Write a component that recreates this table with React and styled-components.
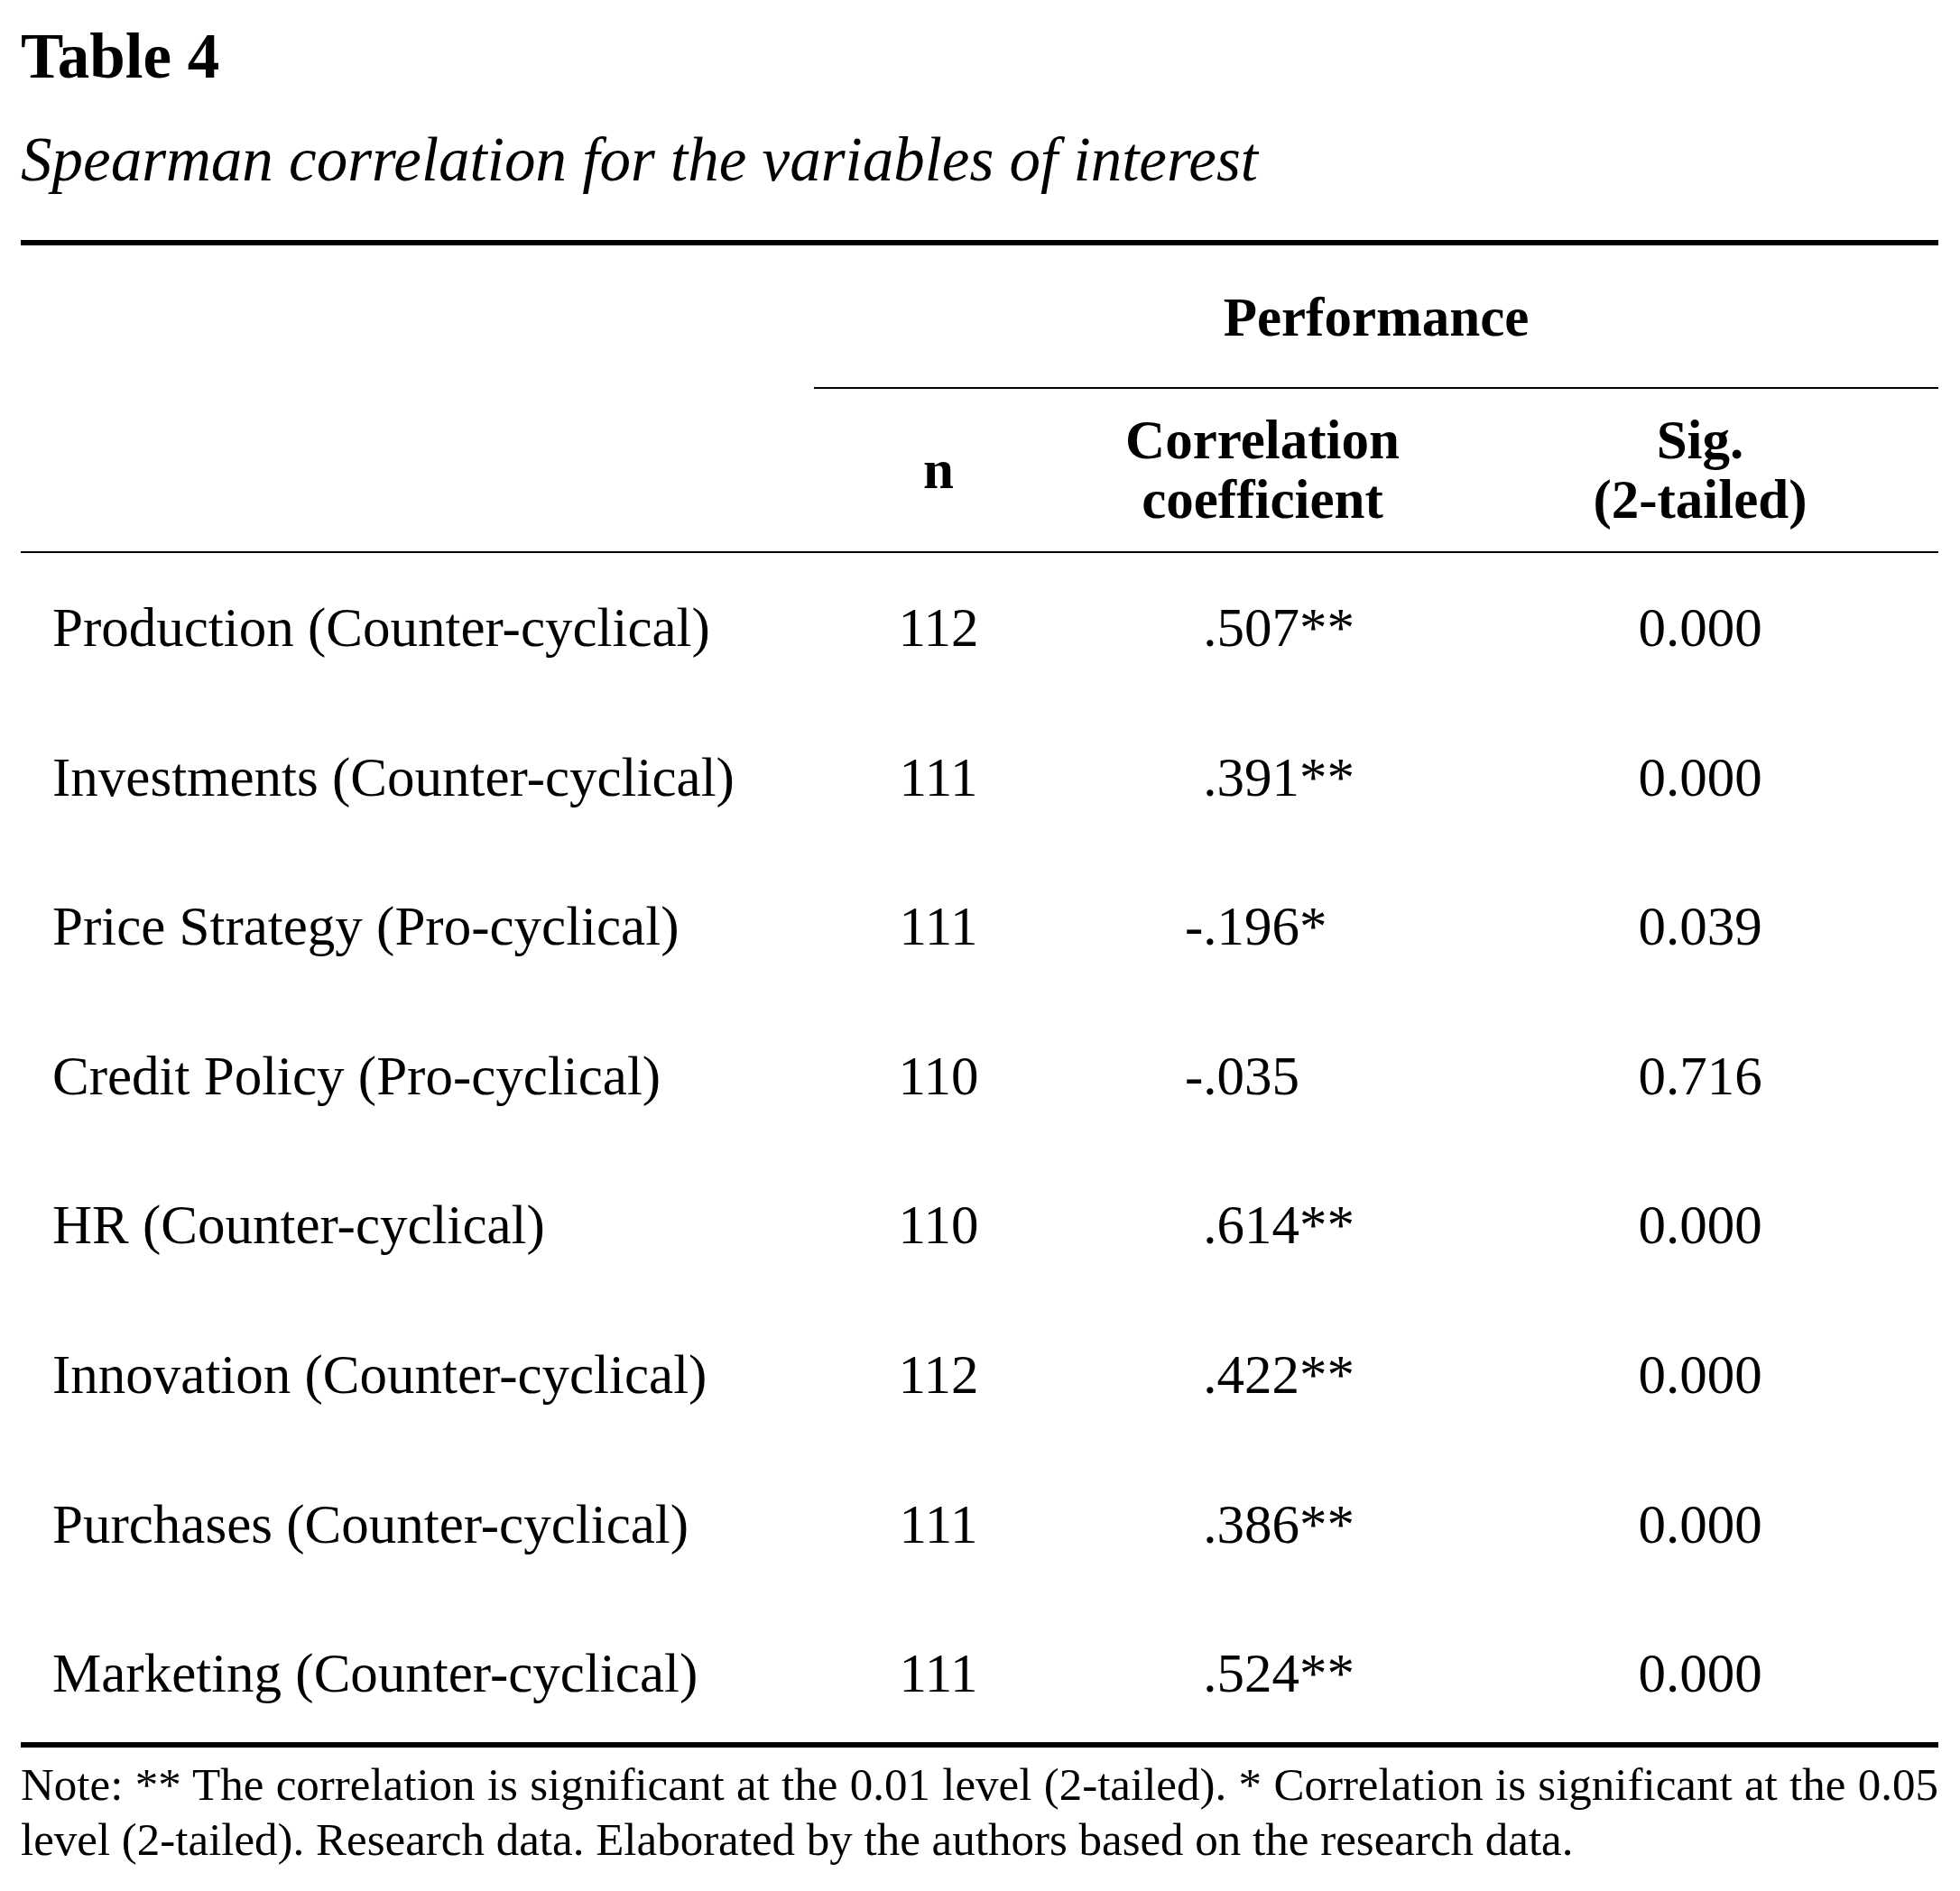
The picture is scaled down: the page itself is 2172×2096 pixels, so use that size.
import React from 'react'
import styled, { createGlobalStyle } from 'styled-components';

const GlobalStyle = createGlobalStyle`
  body {
    margin: 0;
    background: #ffffff;
    color: #000000;
    font-family: "Liberation Serif", "Times New Roman", serif;
  }
`

const rows = [
  { label: 'Production (Counter-cyclical)', n: 112, corr: '.507**', sig: '0.000' },
  { label: 'Investments (Counter-cyclical)', n: 111, corr: '.391**', sig: '0.000' },
  { label: 'Price Strategy (Pro-cyclical)', n: 111, corr: '-.196*', sig: '0.039' },
  { label: 'Credit Policy (Pro-cyclical)', n: 110, corr: '-.035', sig: '0.716' },
  { label: 'HR (Counter-cyclical)', n: 110, corr: '.614**', sig: '0.000' },
  { label: 'Innovation (Counter-cyclical)', n: 112, corr: '.422**', sig: '0.000' },
  { label: 'Purchases (Counter-cyclical)', n: 111, corr: '.386**', sig: '0.000' },
  { label: 'Marketing (Counter-cyclical)', n: 111, corr: '.524**', sig: '0.000' },
]

function App() {
  return (
    <Page>
      <GlobalStyle />
      <Title>Table 4</Title>
      <Caption>Spearman correlation for the variables of interest</Caption>

      <Table>
        <colgroup>
          <col style={{ width: 879 }} />
          <col style={{ width: 276 }} />
          <col style={{ width: 442 }} />
          <col style={{ width: 528 }} />
        </colgroup>
        <thead>
          <tr>
            <GroupCell />
            <GroupCell colSpan={3} $ruled>Performance</GroupCell>
          </tr>
          <tr>
            <HeadCell />
            <HeadCell>n</HeadCell>
            <HeadCell>Correlation<br />coefficient</HeadCell>
            <HeadCell>Sig.<br />(2-tailed)</HeadCell>
          </tr>
        </thead>
        <tbody>
          {rows.map((r) => (
            <Row key={r.label}>
              <LabelCell>{r.label}</LabelCell>
              <NumCell>{r.n}</NumCell>
              <CorrCell>
                {/* keep the decimal points lined up */}
                {!r.corr.startsWith('-') && <Ghost>-</Ghost>}
                {r.corr}
              </CorrCell>
              <NumCell>{r.sig}</NumCell>
            </Row>
          ))}
        </tbody>
      </Table>

      <Note>
        Note: ** The correlation is significant at the 0.01 level (2-tailed). * Correlation is significant at the 0.05 level (2-tailed). Research data. Elaborated by the authors based on the research data.
      </Note>
    </Page>
  )
}

const Page = styled.div`
  width: 2125px;
  padding: 0 24px 0 23px;
`

const Title = styled.h1`
  margin: 12px 0 0 0;
  font-size: 71px;
  line-height: 100px;
  font-weight: bold;
`

const Caption = styled.p`
  margin: 15px 0 0 0;
  font-size: 69px;
  line-height: 100px;
  font-style: italic;
`

const Table = styled.table`
  width: 2125px;
  margin-top: 39px;
  border-collapse: collapse;
  table-layout: fixed;
  border-top: 6px solid #000;
  border-bottom: 6px solid #000;
  font-size: 61px;
  line-height: 66px;
`

const GroupCell = styled.th`
  padding: 47px 0 44px;
  font-weight: bold;
  text-align: center;
  border-bottom: ${(p) => (p.$ruled ? '2px solid #000' : '0')};
`

const HeadCell = styled.th`
  padding: 24px 0 24px;
  font-weight: bold;
  text-align: center;
  vertical-align: middle;
  border-bottom: 2px solid #000;
`

const Row = styled.tr`
  td {
    height: 115.6px;
    padding: 50px 0 0 0;
    vertical-align: top;
    font-weight: normal;
  }
  &:last-child td {
    height: 109px;
  }
`

const LabelCell = styled.td`
  padding-left: 35px !important;
  text-align: left;
  white-space: nowrap;
`

const NumCell = styled.td`
  text-align: center;
`

const CorrCell = styled.td`
  padding-left: 135px !important;
  text-align: left;
`

const Ghost = styled.span`
  visibility: hidden;
`

const Note = styled.p`
  margin: 11px 0 0 0;
  font-size: 51px;
  line-height: 61px;
  text-align: justify;
`

export default App
